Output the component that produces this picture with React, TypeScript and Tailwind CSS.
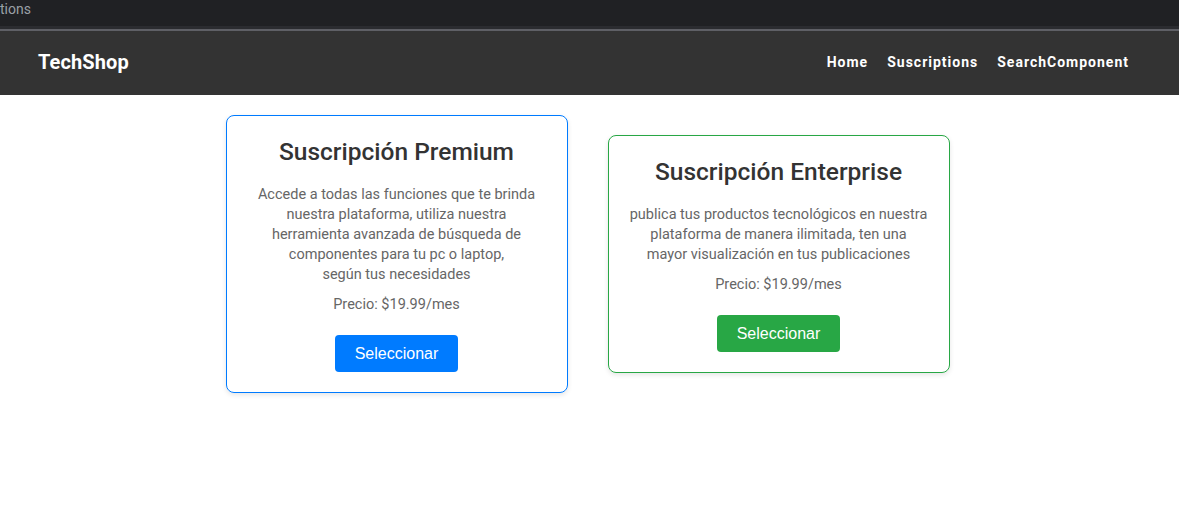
import React from 'react';

type Plan = {
  title: string;
  description: React.ReactNode;
  price: string;
  border: string;
  button: string;
  descWidth: string;
};

const plans: Plan[] = [
  {
    title: 'Suscripción Premium',
    description: (
      <>
        Accede a todas las funciones que te brinda nuestra plataforma, utiliza nuestra herramienta
        avanzada de búsqueda de componentes para tu pc o laptop,
        <br />
        según tus necesidades
      </>
    ),
    price: 'Precio: $19.99/mes',
    border: 'border-[#007bff]',
    button: 'bg-[#007bff]',
    descWidth: 'px-[10px]',
  },
  {
    title: 'Suscripción Enterprise',
    description:
      'publica tus productos tecnológicos en nuestra plataforma de manera ilimitada, ten una mayor visualización en tus publicaciones',
    price: 'Precio: $19.99/mes',
    border: 'border-[#28a745]',
    button: 'bg-[#28a745]',
    descWidth: 'px-[1px]',
  },
];

const App: React.FC = () => {
  return (
    <div className="min-h-screen bg-white font-['Roboto',sans-serif]">
      {/* browser chrome remnant */}
      <div className="h-[26px] bg-[#202124] text-[14px] leading-[18px] text-[#9aa0a6]">
        <span>tions</span>
      </div>
      <div className="h-[3px] bg-[#2b2c30]" />
      <div className="h-[2px] bg-[#5f6066]" />

      <nav className="h-[64px] bg-[#333333] flex items-center justify-between pl-[38px] pr-[50px] pb-[2px]">
        <span className="text-white text-[20px] font-bold tracking-[0.1px]">TechShop</span>
        <ul className="flex items-center gap-[19px] text-white text-[14px] font-bold tracking-[1px]">
          <li>Home</li>
          <li>Suscriptions</li>
          <li>SearchComponent</li>
        </ul>
      </nav>

      <div className="flex justify-center items-center gap-[40px] mt-[20px] pr-[4px]">
        {plans.map((plan) => (
          <div
            key={plan.title}
            className={`w-[342px] border ${plan.border} rounded-[8px] px-[20px] pt-[21px] pb-[20px] text-center shadow-[0_2px_5px_rgba(0,0,0,0.1)]`}
          >
            <h2 className="text-[24.5px] leading-[29px] text-[#333333] font-medium mb-[19px]">
              {plan.title}
            </h2>
            <p className={`text-[14.5px] leading-[20px] text-[#666666] mb-[10px] ${plan.descWidth}`}>
              {plan.description}
            </p>
            <p className="text-[14.5px] leading-[20px] text-[#666666] mb-[20px]">{plan.price}</p>
            <button
              className={`${plan.button} text-white text-[16px] font-['Liberation_Sans',Arial,sans-serif] rounded-[4px] px-[20px] h-[37px]`}
            >
              Seleccionar
            </button>
          </div>
        ))}
      </div>
    </div>
  );
};

export default App;
